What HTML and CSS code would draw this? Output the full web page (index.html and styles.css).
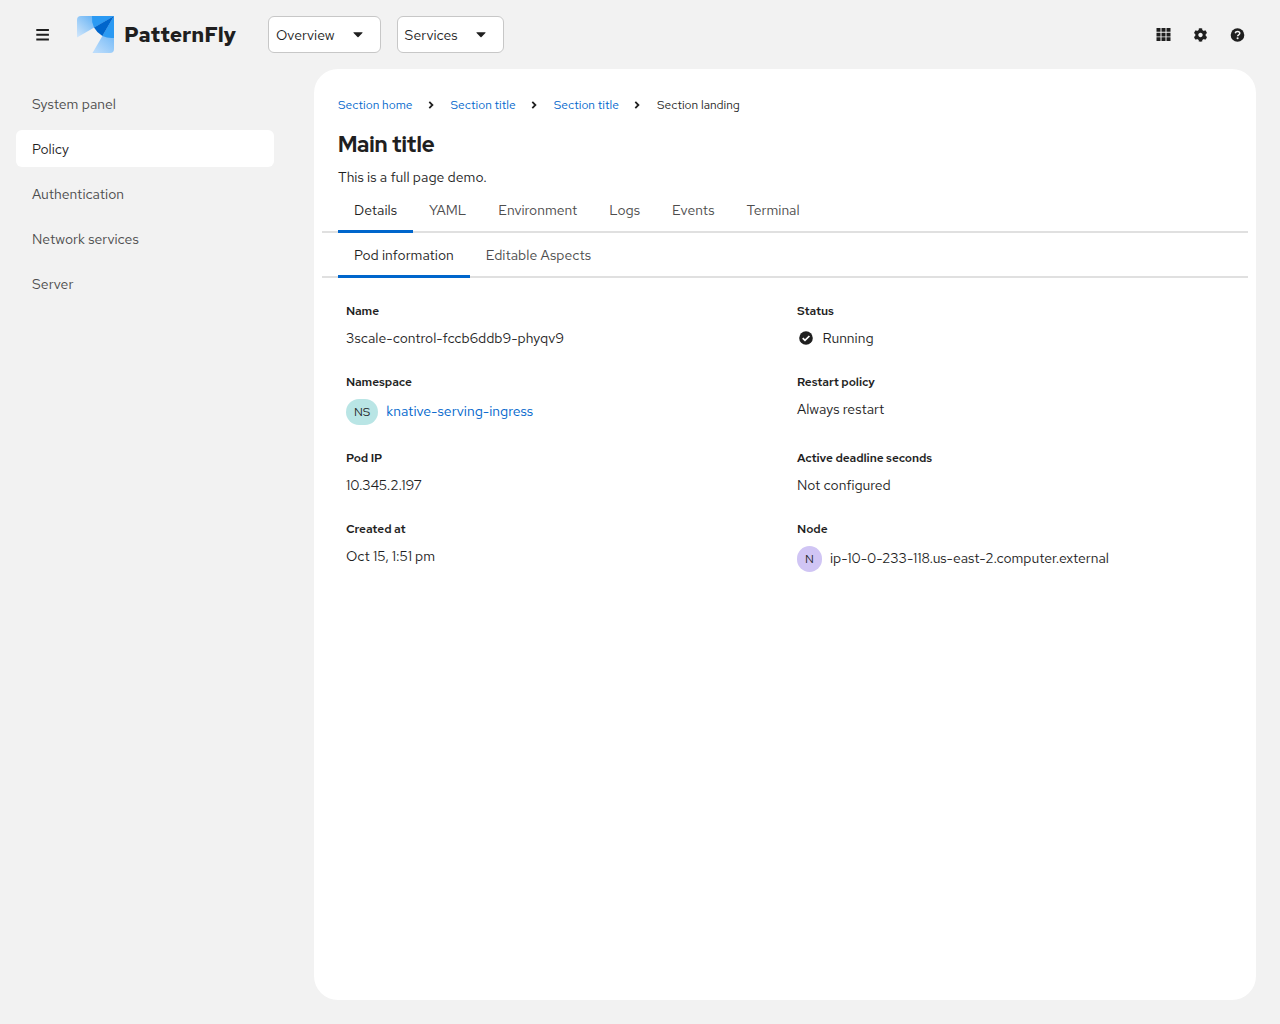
FILE: index.html
```html
<!DOCTYPE html>
<html lang="en">
<head>
<meta charset="utf-8">
<title>PatternFly</title>
<link rel="stylesheet" href="styles.css">
</head>
<body>
<header class="masthead">
  <button class="plain hamburger" aria-label="Global navigation"><svg width="14" height="12" viewBox="0 0 14 12"><path d="M.3 0h12.600v2H.3zM.3 4.700h12.600v2H.3zM.3 9.400h12.600v2H.3z" fill="#1f1f1f"/></svg></button>
  <a class="brand">
    <svg width="37" height="37" viewBox="0 0 37 37">
      <defs>
        <linearGradient id="g1" x1="0" y1="21" x2="17" y2="3" gradientUnits="userSpaceOnUse"><stop offset="0" stop-color="#d2e7fb"/><stop offset="1" stop-color="#6db6f5"/></linearGradient>
        <linearGradient id="g2" x1="20" y1="37" x2="34" y2="20" gradientUnits="userSpaceOnUse"><stop offset="0" stop-color="#bbdcfb"/><stop offset="1" stop-color="#7bbdf7"/></linearGradient>
        <clipPath id="c"><path d="M4 0h33v33a4 4 0 0 1-4 4H0V4a4 4 0 0 1 4-4z"/></clipPath>
      </defs>
      <g clip-path="url(#c)">
        <path d="M37 0H0v21.500z" fill="url(#g1)"/>
        <path d="M37 0v37H15.500z" fill="url(#g2)"/>
        <path d="M37 0H15a22 22 0 0 0 2 11.600z" fill="#2b9af3"/>
        <path d="M37 0v22a22 22 0 0 1-11.600-2z" fill="#2b9af3"/>
        <path d="M37 0L17 11.600a22 22 0 0 0 8.400 8.400z" fill="#06c"/>
      </g>
    </svg>
    <span class="brand-name">PatternFly</span>
  </a>
  <div class="toggles">
    <button class="toggle overview">Overview<svg width="10" height="6" viewBox="0 0 10 6"><path d="M.8.3h8.400q.7.2.2.8L5.500 5q-.5.5-1 0L.6 1.100q-.5-.6.2-.8z" fill="#1f1f1f"/></svg></button>
    <button class="toggle services">Services<svg width="10" height="6" viewBox="0 0 10 6"><path d="M.8.3h8.400q.7.2.2.8L5.500 5q-.5.5-1 0L.6 1.100q-.5-.6.2-.8z" fill="#1f1f1f"/></svg></button>
  </div>
  <div class="tools">
    <button class="plain" aria-label="Applications"><svg width="15" height="13" viewBox="0 0 15 13"><path d="M.5 0h4v3.700h-4zM5.500 0h4v3.700h-4zM10.500 0h4v3.700h-4zM.5 4.700h4v3.700h-4zM5.500 4.700h4v3.700h-4zM10.500 4.700h4v3.700h-4zM.5 9.300h4V13h-4zM5.500 9.300h4V13h-4zM10.500 9.300h4V13h-4z" fill="#1f1f1f"/></svg></button>
    <button class="plain" aria-label="Settings"><svg width="15" height="14" viewBox="-18 0 548 512"><path d="M487.400 315.700l-42.600-24.600c4.300-23.200 4.300-47 0-70.200l42.600-24.600c4.900-2.800 7.100-8.600 5.500-14-11.100-35.600-30-67.800-54.700-94.600-3.800-4.100-10-5.100-14.800-2.300L380.800 110c-17.900-15.400-38.500-27.300-60.800-35.100V25.800c0-5.600-3.900-10.500-9.400-11.700-36.700-8.200-74.300-7.800-109.200 0-5.500 1.200-9.400 6.100-9.400 11.700V75c-22.200 7.900-42.800 19.800-60.800 35.100L88.700 85.500c-4.900-2.800-11-1.900-14.800 2.300-24.700 26.700-43.600 58.900-54.700 94.600-1.700 5.400.6 11.200 5.500 14L67.300 221c-4.300 23.200-4.300 47 0 70.200l-42.600 24.600c-4.900 2.800-7.100 8.600-5.500 14 11.100 35.600 30 67.800 54.700 94.600 3.800 4.100 10 5.100 14.800 2.300l42.600-24.600c17.900 15.400 38.500 27.300 60.800 35.100v49.200c0 5.600 3.900 10.500 9.400 11.700 36.700 8.200 74.300 7.800 109.200 0 5.500-1.200 9.400-6.100 9.400-11.700v-49.200c22.200-7.900 42.800-19.800 60.800-35.100l42.600 24.600c4.900 2.800 11 1.900 14.800-2.300 24.700-26.700 43.600-58.900 54.700-94.600 1.500-5.500-.7-11.300-5.600-14.100zM256 336c-44.100 0-80-35.900-80-80s35.900-80 80-80 80 35.900 80 80-35.900 80-80 80z" fill="#1f1f1f"/></svg></button>
    <button class="plain" aria-label="Help"><svg width="15" height="14" viewBox="-.5 0 15 14"><circle cx="7" cy="7" r="6.800" fill="#1f1f1f"/><path d="M4.700 5.200C5 4 5.900 3.400 7 3.400c1.300 0 2.300.8 2.300 1.900C9.300 6.800 7.100 6.800 7.100 8.300" fill="none" stroke="#f2f2f2" stroke-width="1.500"/><circle cx="7.100" cy="10.300" r="1.050" fill="#f2f2f2"/></svg></button>
  </div>
</header>
<div class="body">
  <nav class="sidebar">
    <a class="nav-link">System panel</a>
    <a class="nav-link current">Policy</a>
    <a class="nav-link">Authentication</a>
    <a class="nav-link">Network services</a>
    <a class="nav-link">Server</a>
  </nav>
  <main class="panel">
    <nav class="breadcrumb">
      <a>Section home</a>
      <svg width="6" height="8" viewBox="0 0 6 8"><path d="M1.300.9L4.400 4 1.300 7.100" fill="none" stroke="#1f1f1f" stroke-width="1.800"/></svg>
      <a>Section title</a>
      <svg width="6" height="8" viewBox="0 0 6 8"><path d="M1.300.9L4.400 4 1.300 7.100" fill="none" stroke="#1f1f1f" stroke-width="1.800"/></svg>
      <a>Section title</a>
      <svg width="6" height="8" viewBox="0 0 6 8"><path d="M1.300.9L4.400 4 1.300 7.100" fill="none" stroke="#1f1f1f" stroke-width="1.800"/></svg>
      <span>Section landing</span>
    </nav>
    <h1>Main title</h1>
    <p>This is a full page demo.</p>
    <div class="tabs">
      <a class="tab active">Details</a>
      <a class="tab">YAML</a>
      <a class="tab">Environment</a>
      <a class="tab">Logs</a>
      <a class="tab">Events</a>
      <a class="tab">Terminal</a>
    </div>
    <div class="tabs">
      <a class="tab active">Pod information</a>
      <a class="tab">Editable Aspects</a>
    </div>
    <dl class="details">
      <div><dt>Name</dt><dd>3scale-control-fccb6ddb9-phyqv9</dd></div>
      <div><dt>Status</dt><dd class="status"><svg width="14" height="14" viewBox="0 0 14 14"><circle cx="7" cy="7" r="6.800" fill="#1f1f1f"/><path d="M3.700 7.100l2.300 2.300 4.400-4.400" fill="none" stroke="#fff" stroke-width="1.700"/></svg>Running</dd></div>
      <div><dt>Namespace</dt><dd class="labelled"><span class="badge teal">NS</span><a>knative-serving-ingress</a></dd></div>
      <div><dt>Restart policy</dt><dd>Always restart</dd></div>
      <div><dt>Pod IP</dt><dd class="address">10.345.2.197</dd></div>
      <div><dt>Active deadline seconds</dt><dd>Not configured</dd></div>
      <div><dt>Created at</dt><dd class="date">Oct 15, 1:51 pm</dd></div>
      <div><dt>Node</dt><dd class="labelled"><span class="badge purple">N</span><span class="node">ip-10-0-233-118.us-east-2.computer.external</span></dd></div>
    </dl>
  </main>
</div>
</body>
</html>
```
FILE: styles.css
```css
* { box-sizing: border-box; }
body {
  margin: 0;
  height: 1024px;
  display: flex;
  flex-direction: column;
  background: #f2f2f2;
  color: #1f1f1f;
  font: 400 14px/21px "Red Hat Text", Inter, sans-serif;
}
svg { display: block; flex: none; }
button { font: inherit; color: inherit; margin: 0; }
a { color: #06c; text-decoration: none; }

.masthead { flex: none; height: 69px; display: flex; align-items: center; padding: 0 24px; }
.plain { width: 37px; height: 37px; padding: 0; border: 0; background: none; display: flex; align-items: center; justify-content: center; }
.brand { display: flex; align-items: center; gap: 10px; width: 175px; margin-left: 16px; color: #1f1f1f; }
.brand-name { font: 700 21px/30px "Red Hat Text", Inter, sans-serif; letter-spacing: -.03px; }
.toggles { display: flex; gap: 16px; margin-left: 16px; }
.toggle { height: 37px; display: flex; align-items: center; justify-content: space-between; padding: 1px 17px 0 7px; border: 1px solid #c7c7c7; border-radius: 6px; background: #fff; }
.overview { width: 112.600px; }
.services { width: 107px; }
.tools { display: flex; margin-left: auto; }

.body { flex: 1; display: flex; padding: 0 24px 24px 16px; min-height: 0; }
.sidebar { width: 258px; margin-right: 40px; padding-top: 16px; display: flex; flex-direction: column; gap: 8px; }
.nav-link { height: 37px; padding: 9px 16px 7px; border-radius: 6px; color: #4d4d4d; }
.nav-link.current { background: #fff; color: #1f1f1f; }

.panel { flex: 1; background: #fff; border-radius: 24px; padding: 26px 8px 0; }
.breadcrumb { display: flex; align-items: center; gap: 16px; height: 20px; padding-left: 16px; font-size: 12px; }
.breadcrumb svg { margin-left: -.5px; margin-right: .5px; }
h1 { margin: 15px 16px 0; font: 800 22px/29px "Red Hat Display", Inter, sans-serif; letter-spacing: -.07px; }
p { margin: 8px 16px 0; }

.tabs { display: flex; height: 45px; padding-left: 16px; border-bottom: 2px solid #e0e0e0; }
.tab { height: 44.500px; padding: 12px 16px 0; color: #4d4d4d; }
.tab.active { color: #1f1f1f; border-bottom: 3px solid #06c; }

.details { margin: 24px 24px 0; display: grid; grid-template-columns: 1fr 1fr; column-gap: 24px; row-gap: 24px; }
dt { font: 600 12px/18px "Red Hat Text", Inter, sans-serif; letter-spacing: -.08px; }
dd { margin: 8px 0 0; }
.status { display: flex; align-items: center; gap: 9.500px; padding-left: 2px; }
.status svg { margin-bottom: 1px; }
.labelled { display: flex; align-items: center; gap: 8px; margin-top: 7px; height: 27px; }
.badge { height: 26px; padding: 1px 8px 0; border-radius: 13px; display: flex; align-items: center; font-size: 12px; }
.teal { background: #b9e5e5; }
.purple { background: #d0c5f4; }
.address { letter-spacing: -.12px; }
.date { letter-spacing: -.06px; }
.node { letter-spacing: -.04px; }
```
